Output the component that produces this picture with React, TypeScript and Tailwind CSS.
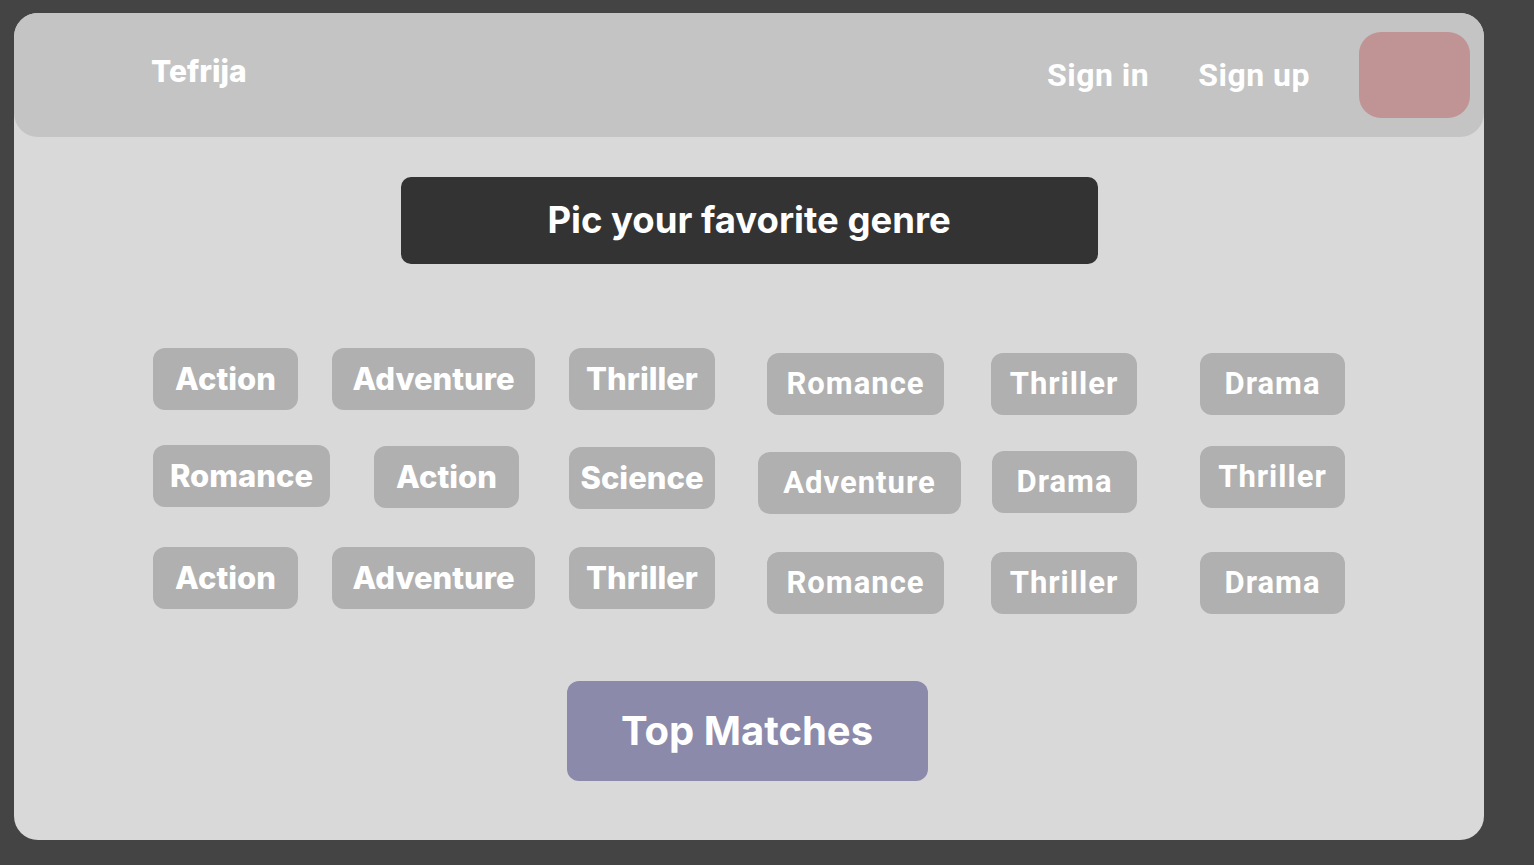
import React from 'react';

type Chip = { label: string; w: string; ml: string; mt: string; font: 'inter' | 'roboto' };

const inter = "font-['Inter',sans-serif]";
const roboto = "font-['Roboto',sans-serif]";

const rows: Chip[][] = [
  [
    { label: 'Action', w: 'w-[145px]', ml: 'ml-0', mt: 'mt-0', font: 'inter' },
    { label: 'Adventure', w: 'w-[203px]', ml: 'ml-[34px]', mt: 'mt-0', font: 'inter' },
    { label: 'Thriller', w: 'w-[146px]', ml: 'ml-[34px]', mt: 'mt-0', font: 'inter' },
    { label: 'Romance', w: 'w-[177px]', ml: 'ml-[52px]', mt: 'mt-[5px]', font: 'roboto' },
    { label: 'Thriller', w: 'w-[146px]', ml: 'ml-[47px]', mt: 'mt-[5px]', font: 'roboto' },
    { label: 'Drama', w: 'w-[145px]', ml: 'ml-[63px]', mt: 'mt-[5px]', font: 'roboto' },
  ],
  [
    { label: 'Romance', w: 'w-[177px]', ml: 'ml-0', mt: 'mt-0', font: 'inter' },
    { label: 'Action', w: 'w-[145px]', ml: 'ml-[44px]', mt: 'mt-[1px]', font: 'inter' },
    { label: 'Science', w: 'w-[146px]', ml: 'ml-[50px]', mt: 'mt-[2px]', font: 'inter' },
    { label: 'Adventure', w: 'w-[203px]', ml: 'ml-[43px]', mt: 'mt-[7px]', font: 'roboto' },
    { label: 'Drama', w: 'w-[145px]', ml: 'ml-[31px]', mt: 'mt-[6px]', font: 'roboto' },
    { label: 'Thriller', w: 'w-[145px]', ml: 'ml-[63px]', mt: 'mt-[1px]', font: 'roboto' },
  ],
  [
    { label: 'Action', w: 'w-[145px]', ml: 'ml-0', mt: 'mt-0', font: 'inter' },
    { label: 'Adventure', w: 'w-[203px]', ml: 'ml-[34px]', mt: 'mt-0', font: 'inter' },
    { label: 'Thriller', w: 'w-[146px]', ml: 'ml-[34px]', mt: 'mt-0', font: 'inter' },
    { label: 'Romance', w: 'w-[177px]', ml: 'ml-[52px]', mt: 'mt-[5px]', font: 'roboto' },
    { label: 'Thriller', w: 'w-[146px]', ml: 'ml-[47px]', mt: 'mt-[5px]', font: 'roboto' },
    { label: 'Drama', w: 'w-[145px]', ml: 'ml-[63px]', mt: 'mt-[5px]', font: 'roboto' },
  ],
];

const rowMargins = ['mt-[84px]', 'mt-[30px]', 'mt-[33px]'];

export default function App() {
  return (
    <div className="w-full h-[865px] bg-[#444444] pt-[13px] pl-[14px] overflow-hidden">
      <div className="w-[1470px] h-[827px] bg-[#d9d9d9] rounded-[24px] flex flex-col">
        {/* Header */}
        <div className="h-[124px] bg-[#c4c4c4] rounded-[24px] flex items-center pl-[137px] pr-[14px]">
          <span className={`${inter} text-white font-extrabold text-[30px] -mt-[8px]`}>Tefrija</span>
          <div className="ml-auto flex items-center">
            <span className={`${roboto} text-white font-bold text-[32px] tracking-[0.5px]`}>Sign in</span>
            <span className={`${roboto} text-white font-bold text-[32px] tracking-[0.5px] ml-[49px]`}>Sign up</span>
            <div className="ml-[49px] w-[111px] h-[86px] rounded-[22px] bg-[#c09494]" />
          </div>
        </div>

        {/* Title */}
        <div className="mt-[40px] self-center w-[697px] h-[87px] bg-[#333333] rounded-[10px] flex items-center justify-center">
          <span className={`${inter} text-white font-bold text-[36.5px]`}>Pic your favorite genre</span>
        </div>

        {/* Genre chips */}
        {rows.map((row, i) => (
          <div key={i} className={`${rowMargins[i]} pl-[139px] flex items-start`}>
            {row.map((chip, j) => (
              <div
                key={j}
                className={`${chip.w} ${chip.ml} ${chip.mt} h-[62px] rounded-[12px] bg-[#b0b0b0] flex items-center justify-center text-white ${chip.font === 'inter' ? `${inter} font-extrabold text-[31px]` : `${roboto} font-bold text-[31px] tracking-[1px]`}`}
              >
                {chip.label}
              </div>
            ))}
          </div>
        ))}

        {/* Submit */}
        <button className={`mt-[67px] self-center -translate-x-[2px] w-[361px] h-[100px] rounded-[12px] bg-[#8b8aab] text-white font-bold text-[40px] ${inter}`}>
          Top Matches
        </button>
      </div>
    </div>
  );
}
